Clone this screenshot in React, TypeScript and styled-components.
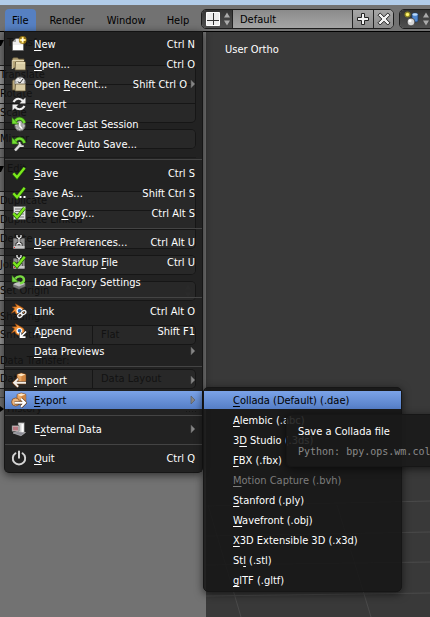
import React from "react";
import styled, { createGlobalStyle, css } from "styled-components";

const Global = createGlobalStyle`
  *, *::before, *::after { box-sizing: border-box; }
  body { margin: 0; background: #393939; }
  body, button, input { font: 11px/20px "DejaVu Sans Condensed", "DejaVu Sans", sans-serif; }
  button { border: 0; padding: 0; background: none; color: inherit; text-align: left; }
`;

const Page = styled.div`
  display: flex;
  flex-direction: column;
  min-height: 100vh;
  overflow: hidden;
`;
const TitleStrip = styled.div`
  height: 5px;
  background: #b1cce9;
`;
const TopBar = styled.header`
  display: flex;
  align-items: flex-end;
  height: 27px;
  padding-left: 5px;
  background: #727272;
  border-bottom: 1px solid #000;
  white-space: nowrap;
`;
const MenuBar = styled.nav`
  display: flex;
  flex: none;
  width: 196px;
`;
const MenuAnchor = styled.div`
  position: relative;
  z-index: 5;
`;
const MenuTitle = styled.button<{ $open?: boolean; $wide?: boolean }>`
  height: 22px;
  padding: 0 8px 0 7px;
  margin-right: ${(p) => (p.$wide ? 7 : 6)}px;
  border-radius: 4px 4px 0 0;
  color: #000;
  background: ${(p) => (p.$open ? "#5680c2" : "transparent")};
  line-height: 24px;
`;
const Selector = styled.div`
  display: flex;
  flex: none;
  height: 20px;
  margin: 0 5px 2px 0;
  border: 1px solid #1c1c1c;
  border-radius: 5px;
  overflow: hidden;
  background: #999;
`;
const Picker = styled.button`
  display: flex;
  align-items: center;
  gap: 4px;
  width: 31px;
  padding-left: 4px;
  background: linear-gradient(#353535, #505050);
  border-right: 1px solid #222;
`;
const NameField = styled.input`
  width: 120px;
  padding: 2px 7px 0;
  border: 0;
  border-right: 1px solid #222;
  background: linear-gradient(#8b8b8b, #a5a5a5);
  color: #000;
`;
const SquareButton = styled.button`
  display: grid;
  place-items: center;
  width: 20px;
  background: linear-gradient(#a6a6a6, #8c8c8c);
  & + & { border-left: 1px solid #222; }
`;

const Workspace = styled.main`
  display: flex;
  flex: 1;
`;
const Shelf = styled.aside`
  flex: none;
  width: 206px;
  background: #727272;
  color: #000;
  padding-right: 10px;
`;
const ShelfPanel = styled.section`
  padding-bottom: 2px;
  border-bottom: 1px solid #444;
`;
const PanelTitle = styled.h2<{ $closed?: boolean }>`
  display: flex;
  align-items: center;
  gap: 3px;
  margin: 0;
  font: inherit;
  line-height: 22px;
  height: 22px;
  margin-bottom: ${(p) => (p.$closed ? 0 : 11)}px;
`;
const ShelfGroup = styled.div<{ $split?: boolean }>`
  display: grid;
  grid-template-columns: ${(p) => (p.$split ? "92px 1fr" : "1fr")};
  gap: 1px;
  margin-bottom: 6px;
  border: 1px solid #222;
  border-left: 0;
  border-radius: 0 5px 5px 0;
  overflow: hidden;
  background: #222;
`;
const ShelfButton = styled.button<{ $inset?: boolean }>`
  display: flex;
  align-items: center;
  justify-content: space-between;
  height: 18px;
  padding: 0 3px 0 ${(p) => (p.$inset ? 8 : 0)}px;
  background: #999;
`;
const ShelfLabel = styled.p`
  margin: 0;
  height: 18px;
`;
const Grip = styled.span`
  width: 11px;
  height: 5px;
  margin-left: auto;
  background: radial-gradient(#222 1px, transparent 1px) 0 0 / 3px 3px;
`;
const Viewport = styled.section`
  position: relative;
  flex: 1;
  min-width: 0;
  background: #393939;
  color: #fff;
`;
const ViewName = styled.p`
  margin: 8px 0 0 19px;
`;
const Grid = styled.svg`
  position: absolute;
  left: 0;
  bottom: 0;
  width: 224px;
  height: 140px;
`;

const surface = css`
  background: rgba(21, 21, 21, 0.86);
  border: 1px solid #161616;
  box-shadow: 0 2px 8px rgba(0, 0, 0, 0.6);
`;
const List = styled.ul`
  list-style: none;
  margin: 0;
  ${surface}
`;
const MainMenu = styled(List)`
  position: absolute;
  top: 100%;
  left: -1px;
  width: 199px;
  padding: 4px 0 3px;
  border-top: 0;
  border-radius: 0 0 5px 5px;
`;
const SubMenu = styled(List)`
  position: absolute;
  top: -4px;
  left: 198px;
  width: 199px;
  padding: 3px 0 0;
  border-radius: 5px;
`;
const Row = styled.li`
  position: relative;
  padding-bottom: 2px;
`;
const Rule = styled.li`
  height: 9px;
  padding-top: 4px;
  &::before {
    content: "";
    display: block;
    height: 1px;
    background: #444;
  }
`;
const Item = styled.button<{ $active?: boolean; $muted?: boolean; $sub?: boolean }>`
  display: flex;
  align-items: center;
  width: 100%;
  height: 18px;
  padding: 0 7px 0 ${(p) => (p.$sub ? 29 : 6)}px;
  line-height: 20px;
  color: ${(p) => (p.$active ? "#000" : p.$muted ? "#7c7c7c" : "#fff")};
  background: ${(p) => (p.$active ? "linear-gradient(#7ba3e8, #557ec6)" : "transparent")};
`;
const IconSlot = styled.span`
  display: block;
  flex: none;
  width: 16px;
  height: 16px;
  margin-right: 7px;
  svg { display: block; }
`;
const Label = styled.span`
  flex: 1;
  height: 18px;
  white-space: nowrap;
`;
const Mnemonic = styled.span`
  text-decoration: underline 1px;
  text-underline-offset: 2px;
`;
const Shortcut = styled.span`
  height: 18px;
  white-space: nowrap;
`;
const ArrowSlot = styled.span`
  display: block;
  width: 6px;
  height: 10px;
  margin: 0 -1px 0 3px;
  svg { display: block; }
`;
const Tooltip = styled.div`
  position: absolute;
  z-index: 2;
  top: 23px;
  left: 82px;
  width: 320px;
  padding: 7px 11px 4px;
  border-radius: 5px;
  ${surface}
  background: rgba(25, 25, 25, 0.9);
  color: #fff;
  white-space: nowrap;
  p { margin: 0; }
`;
const Code = styled.p`
  font: 10px/20px "DejaVu Sans Mono", monospace;
  color: #8a8a8a;
`;

const Svg = ({ children }: { children: React.ReactNode }) => (
  <svg width="16" height="16" viewBox="0 0 16 16" fill="none" aria-hidden="true">{children}</svg>
);
const Check = () => (
  <>
    <path d="M2.5 8.5 6 12.5 13.5 3" stroke="#1f5a08" strokeWidth="3.6" />
    <path d="M2.3 8.3 6 12.2 13.7 2.8" stroke="#7de81e" strokeWidth="2.3" />
  </>
);
const GreenTurn = () => (
  <>
    <path d="M4 5.5C6 1.5 11.5 1 13.5 7" stroke="#2c6c12" strokeWidth="3.6" />
    <path d="M4 5.5C6 1.8 11.5 1 13.5 7" stroke="#72df31" strokeWidth="2.4" />
    <path d="M1 1.5V8h6.5Z" fill="#72df31" stroke="#2c6c12" strokeWidth=".6" />
  </>
);
const Blender = () => (
  <>
    <path d="m1.2 4 4.4-.2L4.4.8 11.5 4.8c3 2 2.4 6.6-1.6 7.4-3.6.6-5.8-1.6-5.9-3.9L.4 10.2l3.2-4.4Z" fill="#f39237" stroke="#9a4a0e" strokeWidth=".6" />
    <circle cx="8.4" cy="7.8" r="2.9" fill="#fff" />
    <circle cx="8.5" cy="7.8" r="1.8" fill="#2a68b0" />
  </>
);
const Crate = () => (
  <>
    <path d="m6 2.5 4.2-1.5 4.6 1.3v7L10.5 11 6 9Z" fill="#e8a663" stroke="#7b4114" strokeWidth=".6" />
    <path d="m6.4 2.7 3.8-1.3 4.2 1.2-4 1.6Z" fill="#ffe7c4" />
    <path d="M10.4 4.2v6.3l4-1.5V2.8Z" fill="#cf8440" />
  </>
);
const Prefs = () => (
  <>
    <path d="M2 4h12v11H2Z" fill="#909090" stroke="#222" strokeWidth=".7" />
    <path d="M2.5 12h11v2.5h-11Z" fill="#c8c8c8" />
    <path d="M8 3.5v7M5.8.8v2.4L8 5l2.2-1.8V.8M5.8 12V10L8 8.5l2.2 1.5v2" stroke="#111" strokeWidth="2.4" />
    <path d="M8 4v6M6 1v2l2 1.7L10 3V1M6 12v-2l2-1.4L10 10v2" stroke="#f2f2f2" strokeWidth="1.3" />
    <path d="M3 13h1v1H3Z" fill="#e22" />
  </>
);
const icons: Record<string, React.ReactNode> = {
  new: (
    <>
      <path d="M5 2.5h7.5v12h-11V6Z" fill="#ededed" stroke="#555" strokeWidth=".5" />
      <path d="M1.5 6H5V2.5Z" fill="#a9a9a9" />
      <path d="M2 9h10v5H2Z" fill="#fff" />
      <circle cx="11.7" cy="4" r="3.9" fill="#a07a10" opacity=".85" />
      <path d="M11.7 1v6M8.7 4h6" stroke="#ffe26a" strokeWidth="2" />
      <path d="M11.7 2.2v3.6M9.9 4h3.6" stroke="#fff" />
    </>
  ),
  open: (
    <>
      <path d="M1.3 13V3l1.2-1.2h4L7.7 3H13v3" fill="#b9a87b" stroke="#625638" strokeWidth=".8" />
      <path d="M1.3 13V4.5H13" stroke="#e4d8b5" />
      <path d="M4.5 6h10v8H4Z" fill="#d9cca4" stroke="#625638" strokeWidth=".8" />
      <path d="M5 6.8h9" stroke="#fff4ce" />
    </>
  ),
  recent: (
    <>
      <path d="M1.3 14V5l1.2-1h4l1 1H13v9Z" fill="#b9a87b" stroke="#625638" strokeWidth=".8" />
      <circle cx="9" cy="6.3" r="5.3" fill="#e9e9e9" stroke="#777" strokeWidth=".8" />
      <path d="M9 7 12 3M9 7 6.7 5.7" stroke="#333" />
      <path d="M9 1v2M4 6h1.6M12.8 6h1.4" stroke="#777" />
      <path d="M4.5 8h10v7H4Z" fill="#d9cca4" stroke="#625638" strokeWidth=".8" />
    </>
  ),
  revert: (
    <>
      <path d="M2.5 6C5 1.5 9.5 2.2 12 5" stroke="#eee" strokeWidth="2.1" />
      <path d="M14.5 1.5v6h-6Z" fill="#eee" />
      <path d="M13.5 10c-2.5 4.5-7 3.8-9.5 1" stroke="#eee" strokeWidth="2.1" />
      <path d="M1.5 14.5v-6h6Z" fill="#eee" />
    </>
  ),
  last: (
    <>
      <circle cx="9" cy="9.7" r="5.2" fill="#a6a6a6" stroke="#5c5c5c" />
      <circle cx="9" cy="9.7" r="4" stroke="#e6e6e6" strokeDasharray="1 2" />
      <path d="M8.8 6.5V10l2 2.5" stroke="#fff" strokeWidth="1.4" />
      <GreenTurn />
    </>
  ),
  auto: (
    <>
      <path d="m4.5 14 5-6" stroke="#444" strokeWidth="3.7" />
      <path d="m4 14.5 6-6.5" stroke="#ddd" strokeWidth="2.4" />
      <path d="M8.5 6v4.2h4.2" stroke="#ddd" strokeWidth="1.8" />
      <GreenTurn />
    </>
  ),
  save: <Check />,
  saveas: (
    <>
      <Check />
      <path d="M8.5 11h2v2h-2ZM12.5 11h2v2h-2Z" fill="#fff" />
    </>
  ),
  copy: (
    <>
      <path d="M2.5 1.5h12v13h-12Z" fill="#e1e1e1" stroke="#666" strokeWidth=".6" />
      <path d="M4 4h9M4 6.5h9M4 9h9M4 12h9" stroke="#777" />
      <Check />
    </>
  ),
  prefs: <Prefs />,
  startup: (
    <>
      <Prefs />
      <Check />
    </>
  ),
  factory: (
    <>
      <path d="m2 10.5 5.5-3 7 2.5v2.5L8 15.5l-6-2.5Z" fill="#777" stroke="#333" strokeWidth=".6" />
      <path d="m2 10.3 5.5-3 7 2.5L8 12.5Z" fill="#c1c1c1" />
      <path d="M4 5C7 1 12.8 1.8 13 6c0 2-2 3-4.2 3.4" stroke="#79da42" strokeWidth="2.4" />
      <path d="M1 1.5V8h6.5Z" fill="#79da42" stroke="#2c6c12" strokeWidth=".6" />
    </>
  ),
  link: (
    <>
      <Blender />
      <g stroke="#2a2a2a" strokeWidth="2.6">
        <ellipse cx="9" cy="12.4" rx="2.4" ry="1.8" transform="rotate(-35 9 12.4)" />
        <ellipse cx="12.6" cy="9.6" rx="2.4" ry="1.8" transform="rotate(-35 12.6 9.6)" />
      </g>
      <g stroke="#f4f4f4" strokeWidth="1.3">
        <ellipse cx="9" cy="12.4" rx="2.4" ry="1.8" transform="rotate(-35 9 12.4)" />
        <ellipse cx="12.6" cy="9.6" rx="2.4" ry="1.8" transform="rotate(-35 12.6 9.6)" />
      </g>
    </>
  ),
  append: (
    <>
      <Blender />
      <path d="M15 8.5 10 13.5M9.5 9.5v4.6h5" stroke="#2a2a2a" strokeWidth="2.8" />
      <path d="M15 8.5 10 13.5M9.5 9.5v4.6h5" stroke="#fff" strokeWidth="1.7" />
    </>
  ),
  import: (
    <>
      <Crate />
      <path d="M15 10.8H3M7.2 6.4 2.8 10.8l4.4 4.2" stroke="#5a3213" strokeWidth="3.2" />
      <path d="M15 10.8H3M7.2 6.6 3 10.8l4.2 4" stroke="#f3eee8" strokeWidth="1.9" />
    </>
  ),
  export: (
    <>
      <Crate />
      <circle cx="4.6" cy="10" r="4" fill="#ecb57c" stroke="#7b4114" strokeWidth=".7" />
      <path d="M3.5 10.8H14M10 6.8l4.2 4-4.2 4" stroke="#5a3213" strokeWidth="3.2" />
      <path d="M3.5 10.8H14M10 6.8l4.2 4-4.2 4" stroke="#fff" strokeWidth="1.9" />
    </>
  ),
  external: (
    <>
      <path d="M7 1.5h6.5V11L10 13 7 11Z" fill="#d3d3d3" stroke="#444" strokeWidth=".6" />
      <path d="M10.5 3h2v8l-2 1Z" fill="#fff" />
      <path d="M1 4.5h7v6H1Z" fill="#d2d2d2" stroke="#555" strokeWidth=".7" />
      <path d="M2 5.5h5v4H2Z" fill="#b87880" />
      <path d="m2 12 4-1.5 8.5 1L10 14.8Z" fill="#8d8d96" stroke="#ddd" strokeWidth=".5" />
    </>
  ),
  quit: (
    <>
      <path d="M4.5 3.2a6.2 6.2 0 1 0 7 0" stroke="#d5d5d5" strokeWidth="1.9" strokeLinecap="round" />
      <path d="M8 1.5v6.3" stroke="#e9e9e9" strokeWidth="1.8" strokeLinecap="round" />
    </>
  ),
};
const Arrow = () => (
  <ArrowSlot>
    <svg width="6" height="10" aria-hidden="true"><path d="M1 1v8l4-4Z" fill="#858585" stroke="#555" strokeWidth=".6" /></svg>
  </ArrowSlot>
);
const Stepper = () => (
  <svg width="7" height="14" aria-hidden="true"><path d="m0 5.5 3-5 3 5ZM0 8.5h6l-3 5Z" fill="#aaa" /></svg>
);
const Fold = ({ closed }: { closed?: boolean }) => (
  <svg width="4" height="8" aria-hidden="true"><path d={closed ? "M0 1v6l4-3Z" : "M0 1h4L1 7H0Z"} /></svg>
);

/* An ampersand marks the letter that follows it as the keyboard mnemonic. */
const Text = ({ value }: { value: string }) => {
  const at = value.indexOf("&");
  if (at < 0) return <>{value}</>;
  return (
    <>
      {value.slice(0, at)}
      <Mnemonic>{value[at + 1]}</Mnemonic>
      {value.slice(at + 2)}
    </>
  );
};

type Entry = { icon?: string; label: string; keys?: string; more?: boolean };
const sections: Entry[][] = [
  [
    { icon: "new", label: "&New", keys: "Ctrl N" },
    { icon: "open", label: "&Open...", keys: "Ctrl O" },
    { icon: "recent", label: "Open &Recent...", keys: "Shift Ctrl O", more: true },
    { icon: "revert", label: "Re&vert" },
    { icon: "last", label: "Recover &Last Session" },
    { icon: "auto", label: "Recover &Auto Save..." },
  ],
  [
    { icon: "save", label: "&Save", keys: "Ctrl S" },
    { icon: "saveas", label: "Save As...", keys: "Shift Ctrl S" },
    { icon: "copy", label: "Save &Copy...", keys: "Ctrl Alt S" },
  ],
  [
    { icon: "prefs", label: "&User Preferences...", keys: "Ctrl Alt U" },
    { icon: "startup", label: "Save Startup &File", keys: "Ctrl U" },
    { icon: "factory", label: "Load Fac&tory Settings" },
  ],
  [
    { icon: "link", label: "Link", keys: "Ctrl Alt O" },
    { icon: "append", label: "A&ppend", keys: "Shift F1" },
    { label: "&Data Previews", more: true },
  ],
  [
    { icon: "import", label: "&Import", more: true },
    { icon: "export", label: "&Export", more: true },
  ],
  [{ icon: "external", label: "E&xternal Data", more: true }],
  [{ icon: "quit", label: "&Quit", keys: "Ctrl Q" }],
];
const formats = [
  "&Collada (Default) (.dae)",
  "&Alembic (.abc)",
  "3&D Studio (.3ds)",
  "&FBX (.fbx)",
  "&Motion Capture (.bvh)",
  "&Stanford (.ply)",
  "&Wavefront (.obj)",
  "&X3D Extensible 3D (.x3d)",
  "St&l (.stl)",
  "&glTF (.gltf)",
];

const ExportMenu = () => (
  <SubMenu>
    {formats.map((f, i) => (
      <Row key={f}>
        <Item $sub $active={i === 0} $muted={i === 4} disabled={i === 4}>
          <Label><Text value={f} /></Label>
        </Item>
        {i === 0 && (
          <Tooltip role="tooltip">
            <p>Save a Collada file</p>
            <Code>Python: bpy.ops.wm.col</Code>
          </Tooltip>
        )}
      </Row>
    ))}
  </SubMenu>
);

const FileMenu = () => (
  <MainMenu>
    {sections.map((entries, s) => (
      <React.Fragment key={s}>
        {s > 0 && <Rule role="separator" />}
        {entries.map((e) => {
          const active = e.icon === "export";
          return (
            <Row key={e.label}>
              <Item $active={active}>
                <IconSlot>{e.icon && <Svg>{icons[e.icon]}</Svg>}</IconSlot>
                <Label><Text value={e.label} /></Label>
                {e.keys && <Shortcut>{e.keys}</Shortcut>}
                {e.more && <Arrow />}
              </Item>
              {active && <ExportMenu />}
            </Row>
          );
        })}
      </React.Fragment>
    ))}
  </MainMenu>
);

export default function App() {
  return (
    <Page>
      <Global />
      <TitleStrip />
      <TopBar>
        <MenuBar>
          <MenuAnchor>
            <MenuTitle $open>File</MenuTitle>
            <FileMenu />
          </MenuAnchor>
          <MenuTitle $wide>Render</MenuTitle>
          <MenuTitle>Window</MenuTitle>
          <MenuTitle>Help</MenuTitle>
        </MenuBar>
        <Selector>
          <Picker aria-label="Screen layout">
            <svg width="14" height="14" aria-hidden="true">
              <path d="M.5.5h13v13H.5Z" fill="#eee" stroke="#fff" />
              <path d="M7.5 1v12M1 8.5h12" stroke="#333" />
            </svg>
            <Stepper />
          </Picker>
          <NameField aria-label="Screen name" defaultValue="Default" />
          <SquareButton aria-label="Add screen">
            <svg width="14" height="14" aria-hidden="true">
              <path d="M5.5 1.5h3v4h4v3h-4v4h-3v-4h-4v-3h4Z" fill="#f2f2f2" stroke="#222" />
            </svg>
          </SquareButton>
          <SquareButton aria-label="Delete screen">
            <svg width="14" height="14" aria-hidden="true">
              <path d="m3.2 1 3.8 3.8L10.8 1 13 3.2 9.2 7l3.8 3.8-2.2 2.2L7 9.2 3.2 13 1 10.8 4.8 7 1 3.2Z" fill="#f2f2f2" stroke="#222" />
            </svg>
          </SquareButton>
        </Selector>
        <Selector>
          <Picker aria-label="Scene">
            <svg width="15" height="16" aria-hidden="true">
              <path d="M8 3.5c0-2 6-2 6 0v6c0 2-6 2-6 0Z" fill="#4e86cf" stroke="#173a69" strokeWidth=".7" />
              <ellipse cx="11" cy="3.5" rx="2.7" ry="1.2" fill="#b9d8fa" />
              <circle cx="7" cy="11" r="3.9" fill="#d6d6d6" stroke="#222" strokeWidth=".7" />
              <circle cx="6" cy="9.8" r="1.5" fill="#fff" />
              <circle cx="3.5" cy="3.5" r="3" fill="#8d8424" />
              <circle cx="3.5" cy="3.5" r="1.7" fill="#fff36b" />
            </svg>
            <Stepper />
          </Picker>
          <NameField aria-label="Scene name" />
        </Selector>
      </TopBar>
      <Workspace>
        <Shelf>
          <ShelfPanel>
            <PanelTitle><Fold />Transform</PanelTitle>
            <ShelfGroup>
              <ShelfButton>Translate</ShelfButton>
              <ShelfButton>Rotate</ShelfButton>
              <ShelfButton>Scale</ShelfButton>
            </ShelfGroup>
            <ShelfGroup><ShelfButton>Mirror</ShelfButton></ShelfGroup>
          </ShelfPanel>
          <ShelfPanel>
            <PanelTitle><Fold />Edit</PanelTitle>
            <ShelfGroup>
              <ShelfButton>Duplicate</ShelfButton>
              <ShelfButton>Duplicate Linked</ShelfButton>
              <ShelfButton>Delete</ShelfButton>
            </ShelfGroup>
            <ShelfGroup><ShelfButton>Join</ShelfButton></ShelfGroup>
            <ShelfGroup><ShelfButton>Set Origin<Stepper /></ShelfButton></ShelfGroup>
            <ShelfLabel>Shading:</ShelfLabel>
            <ShelfGroup $split>
              <ShelfButton>Smooth</ShelfButton>
              <ShelfButton $inset>Flat</ShelfButton>
            </ShelfGroup>
            <ShelfLabel>Data Transfer:</ShelfLabel>
            <ShelfGroup $split>
              <ShelfButton>Data</ShelfButton>
              <ShelfButton $inset>Data Layout</ShelfButton>
            </ShelfGroup>
          </ShelfPanel>
          <PanelTitle $closed><Fold closed />History<Grip /></PanelTitle>
        </Shelf>
        <Viewport>
          <ViewName>User Ortho</ViewName>
          <Grid viewBox="0 0 224 140" aria-hidden="true">
            <path d="M0 29 224 24M0 59 224 55M0 88 224 85M0 119 224 116M2 28 35 140M131 28 165 140" stroke="#4b4b4b" fill="none" />
          </Grid>
        </Viewport>
      </Workspace>
    </Page>
  );
}
